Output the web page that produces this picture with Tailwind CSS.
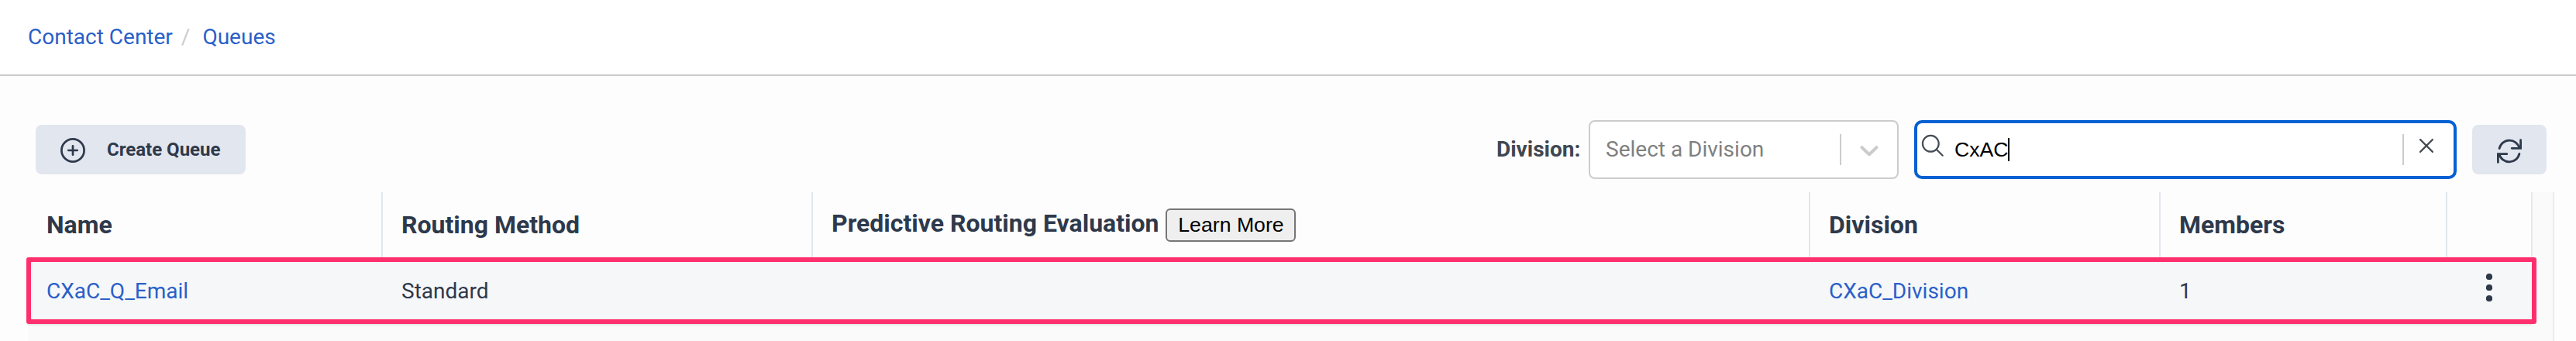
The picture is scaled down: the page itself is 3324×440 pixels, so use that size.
<!DOCTYPE html>
<html lang="en">
<head>
<meta charset="utf-8">
<title>Queues</title>
<script src="https://cdn.jsdelivr.net/npm/@tailwindcss/browser@4"></script>
</head>
<body class="h-[440px] w-[3324px] overflow-hidden bg-[#fdfdfd] font-[Roboto,sans-serif] text-[#2e394b]">
<div class="flex h-full flex-col">
  <header class="flex h-[98px] shrink-0 items-center border-b-2 border-[#ccc] bg-white pl-9 text-[28px] text-[#2a60c8]">
    <a>Contact Center</a><span class="ml-[11px] text-[#ccc]">/</span><a class="ml-4">Queues</a>
  </header>

  <div class="flex h-[150px] shrink-0 items-center justify-between pt-10 pr-[38px] pl-[46px]">
    <button class="flex h-16 w-[271px] items-center rounded-lg bg-[#e2e6ef] pl-8 text-2xl font-bold">
      <svg class="mt-[2px] h-8 w-8" viewBox="0 0 32 32" fill="none" stroke="currentColor" stroke-width="2.7" stroke-linecap="round"><circle cx="16" cy="16" r="14.6"/><path d="M16 10.3v11.4M10.3 16h11.4"/></svg>
      <span class="ml-[28px]">Create Queue</span>
    </button>
    <div class="flex items-center">
      <label class="w-[119px] text-[28px] font-bold text-[#3f4751]">Division:</label>
      <div class="flex h-19 w-[400px] items-center rounded-lg border-2 border-[#ccc] bg-white pl-5 text-[28px] text-[#808080]">
        <span class="w-[302px]">Select a Division</span>
        <span class="h-10 w-[2px] bg-[#ccc]"></span>
        <svg class="mt-[3px] ml-[23px] h-4 w-[26px]" viewBox="0 0 26 16" fill="none" stroke="#ccc" stroke-width="4" stroke-linecap="round" stroke-linejoin="round"><path d="M3.5 3.2 13 12.3l9.5-9.1"/></svg>
      </div>
      <div class="ml-5 flex h-19 w-[700px] items-center rounded-[10px] border-4 border-[#0460d3] bg-white text-[26.67px] text-black">
        <svg class="mt-[-10px] ml-[5px] h-[30px] w-[30px]" viewBox="0 0 30 30" fill="none" stroke="#454c55" stroke-width="2.2" stroke-linecap="round"><circle cx="12.3" cy="12.3" r="10.4"/><path d="m19.7 19.7 8 8"/></svg>
        <span class="ml-[13px] font-['Liberation_Sans',sans-serif]">CxAC</span>
        <span class="ml-[-1px] h-[30px] w-[2px] bg-black"></span>
        <span class="mr-5 ml-auto h-10 w-[2px] bg-[#ccc]"></span>
        <svg class="mt-[-10px] mr-[26px] h-[18px] w-[18px]" viewBox="0 0 18 18" fill="none" stroke="#454c55" stroke-width="2.2" stroke-linecap="round"><path d="m1.1 1.1 15.8 15.8M16.9 1.1 1.1 16.9"/></svg>
      </div>
      <button class="ml-5 flex h-16 w-24 items-center justify-center rounded-lg bg-[#e2e6ef]">
        <svg class="mt-[4px] h-8 w-8" viewBox="0 0 32 32" fill="none" stroke="currentColor" stroke-width="2.8" stroke-linecap="round"><path d="M3.1 12.6A13.3 13.3 0 0 1 29 12.2M19.2 12.3h11.4V1.6M28.9 19.4A13.3 13.3 0 0 1 3 19.8M12.8 19.7H1.4v10.7"/></svg>
      </button>
    </div>
  </div>

  <div class="ml-9 flex w-[3260px] grow border-r-2 border-[#ededed] bg-[#fafafa]">
    <div class="w-[3232px]">
      <div class="flex h-[85px] border-r-2 border-[#e8e8e8] bg-[#fdfdfd] pb-px text-[32px] font-bold">
        <div class="flex w-[458px] items-center border-r-2 border-[#e2e6f0] pl-6">Name</div>
        <div class="flex w-[555px] items-center border-r-2 border-[#e2e6f0] pl-6">Routing Method</div>
        <div class="flex w-[1287px] items-center border-r-2 border-[#e2e6f0] pl-6"><span class="mt-[-4px]">Predictive Routing Evaluation</span><button class="ml-[9px] h-[43px] w-[168px] rounded-md border-2 border-[#767676] bg-[#efefef] font-['Liberation_Sans',sans-serif] text-[26.67px] leading-[39px] font-normal text-black">Learn More</button></div>
        <div class="flex w-[452px] items-center border-r-2 border-[#e2e6f0] pl-6">Division</div>
        <div class="flex w-[370px] items-center border-r-2 border-[#e2e6f0] pl-6">Members</div>
      </div>
      <div class="relative flex h-[87px] items-center border-b-2 border-[#e8e8e8] bg-[#f6f7f9] text-[28px]">
        <a class="w-[458px] pl-6 text-[#2a60c8]">CXaC_Q_Email</a>
        <span class="w-[1842px] pl-6">Standard</span>
        <a class="w-[452px] pl-6 text-[#2a60c8]">CXaC_Division</a>
        <span class="w-[370px] pl-6">1</span>
        <svg class="mt-[-9px] ml-[50px] h-9 w-2" viewBox="0 0 8 36" fill="currentColor"><circle cx="4" cy="4" r="4.1"/><circle cx="4" cy="18" r="4.1"/><circle cx="4" cy="32" r="4.1"/></svg>
        <div class="absolute top-[-1px] left-[-2.5px] h-[86px] w-[3239px] rounded-[3px] border-6 border-[#ff2f6d]"></div>
      </div>
    </div>
  </div>
</div>
</body>
</html>
